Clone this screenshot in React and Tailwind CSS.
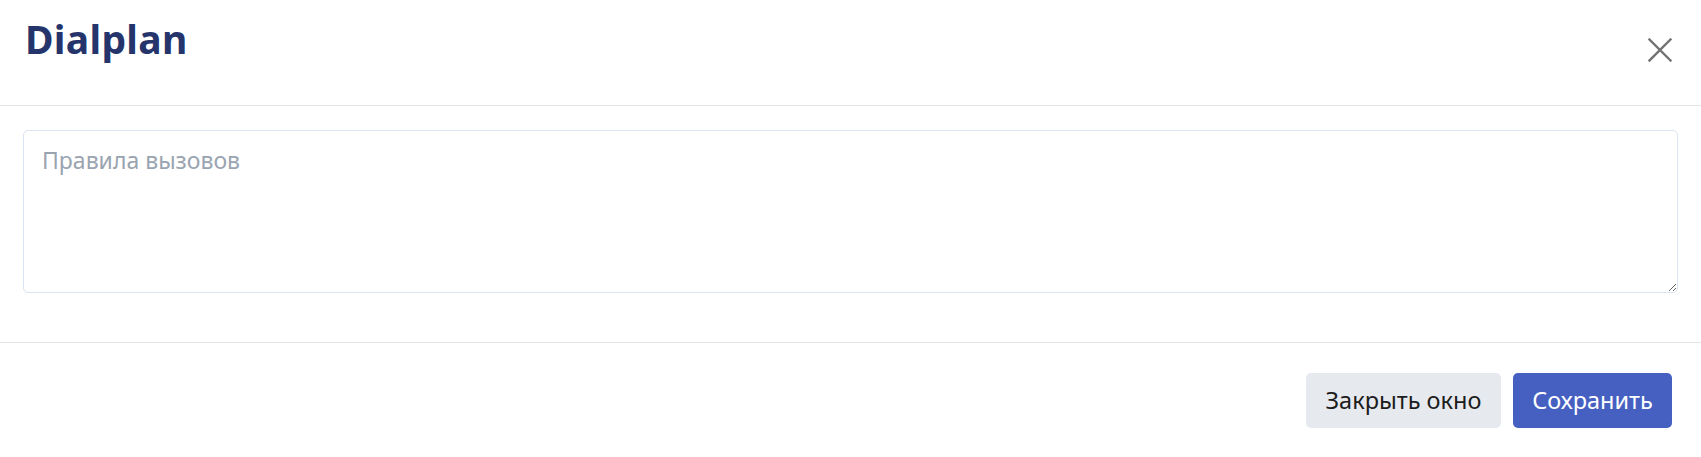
import React from "react";

export default function App() {
  return (
    <div
      className="w-[1701px] h-[457px] bg-white flex flex-col overflow-hidden"
      style={{ fontFamily: '"Noto Sans", "Open Sans", sans-serif' }}
    >
      <div className="h-[106px] shrink-0 border-b border-[#e4e4e4] flex items-start justify-between pl-[25px] pr-[29px]">
        <h1 className="mt-[14px] text-[39px] leading-[50px] font-bold text-[#25346b] tracking-[0.3px]">
          Dialplan
        </h1>
        <button className="mt-[38px] w-[24px] h-[24px] text-[#737373]">
          <svg viewBox="0 0 24 24" width="24" height="24" fill="none" stroke="currentColor" strokeWidth="2.4" strokeLinecap="square">
            <path d="M1.5 1.5 L22.5 22.5 M22.5 1.5 L1.5 22.5" />
          </svg>
        </button>
      </div>
      <div className="px-[23px] pr-[23px] pt-[24px] h-[237px] shrink-0 border-b border-[#e4e4e4]">
        <textarea
          placeholder="Правила вызовов"
          className="block w-full h-[163px] border border-[#dae5f1] rounded-[5px] px-[18px] pt-[14px] pb-[10px] text-[23px] leading-[30px] text-[#333] placeholder:text-[#9aa4b0] outline-none resize-y"
        />
      </div>
      <div className="flex justify-end gap-[12px] pt-[30px] pr-[29px]">
        <button className="h-[55px] w-[195px] rounded-[5px] bg-[#e6e9ee] text-[#1c1c1c] text-[23.5px]">
          Закрыть окно
        </button>
        <button className="h-[55px] w-[159px] rounded-[5px] bg-[#4660c1] text-white text-[23.5px]">
          Сохранить
        </button>
      </div>
    </div>
  );
}
